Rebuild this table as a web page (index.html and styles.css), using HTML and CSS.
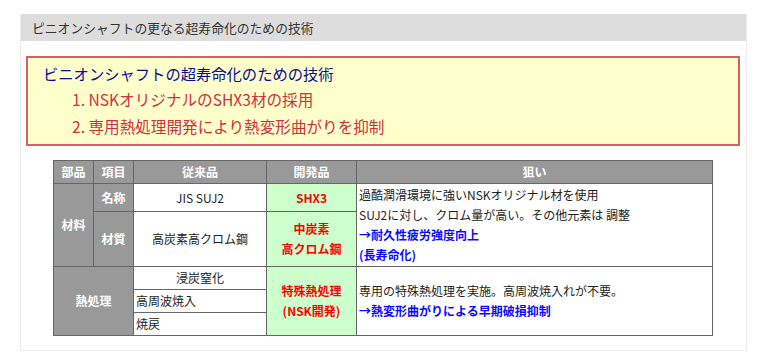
FILE: index.html
```html
<!DOCTYPE html>
<html lang="ja">
<head>
<meta charset="utf-8">
<link rel="stylesheet" href="styles.css">
</head>
<body>
<div class="panel">
  <h2 class="panel-title">ピニオンシャフトの更なる超寿命化のための技術</h2>
  <div class="panel-body">
    <div class="summary">
      <p class="summary-title">ビニオンシャフトの超寿命化のための技術</p>
      <ol class="summary-list">
        <li>1. NSKオリジナルのSHX3材の採用</li>
        <li>2. 専用熱処理開発により熱変形曲がりを抑制</li>
      </ol>
    </div>
    <table class="spec">
      <colgroup>
        <col class="c1"><col class="c2"><col class="c3"><col class="c4"><col class="c5">
      </colgroup>
      <tr class="r-head">
        <th>部品</th><th>項目</th><th>従来品</th><th>開発品</th><th>狙い</th>
      </tr>
      <tr class="r-name">
        <th rowspan="2">材料</th>
        <th>名称</th>
        <td class="center">JIS SUJ2</td>
        <td class="dev">SHX3</td>
        <td rowspan="2" class="aim">過酷潤滑環境に強いNSKオリジナル材を使用<br>SUJ2に対し、クロム量が高い。その他元素は 調整<br><b class="blue">→耐久性疲労強度向上<br>(長寿命化)</b></td>
      </tr>
      <tr class="r-mat">
        <th>材質</th>
        <td class="center">高炭素高クロム鋼</td>
        <td class="dev">中炭素<br>高クロム鋼</td>
      </tr>
      <tr class="r-sub">
        <th rowspan="3" colspan="2">熱処理</th>
        <td class="center">浸炭窒化</td>
        <td rowspan="3" class="dev">特殊熱処理<br>(NSK開発)</td>
        <td rowspan="3" class="aim">専用の特殊熱処理を実施。高周波焼入れが不要。<br><b class="blue">→熱変形曲がりによる早期破損抑制</b></td>
      </tr>
      <tr class="r-sub">
        <td>高周波焼入</td>
      </tr>
      <tr class="r-sub">
        <td>焼戻</td>
      </tr>
    </table>
  </div>
</div>
</body>
</html>
```

FILE: styles.css
```css
* { box-sizing: border-box; }
body {
  margin: 0;
  background: #fff;
  font-family: "Noto Sans CJK JP", "Noto Sans", sans-serif;
  color: #222;
}
.panel {
  width: 727px;
  margin: 14px 0 0 20px;
  border: 1px solid #ececec;
  border-top: none;
}
.panel-title {
  margin: 0;
  background: #dddddd;
  height: 27px;
  line-height: 27px;
  padding-left: 11px;
  font-size: 12.8px;
  font-weight: normal;
  color: #333;
}
.panel-body {
  padding: 15px 6px 14px 5px;
}
.summary {
  border: 2px solid #d06464;
  background: #ffffcc;
  padding: 2px 0 4px 15px;
}
.summary-title {
  margin: 0;
  line-height: 26px;
  font-size: 15.3px;
  color: #0a0a96;
}
.summary-list {
  list-style: none;
  margin: 0;
  padding: 0 0 0 29px;
  font-size: 15.6px;
  line-height: 27px;
  color: #d0303c;
}
.spec {
  width: 659px;
  margin: 14px auto 0;
  border-collapse: collapse;
  table-layout: fixed;
  font-size: 12px;
  line-height: 20px;
}
.c1 { width: 40px; }
.c2 { width: 40px; }
.c3 { width: 133px; }
.c4 { width: 90px; }
.c5 { width: 356px; }
.spec th, .spec td {
  border: 1px solid #666;
  padding: 0 2px;
}
.spec th {
  background: #999999;
  color: #fff;
  font-weight: bold;
  text-align: center;
}
.spec td { background: #fff; color: #222; }
.r-head { height: 23px; }
.r-name { height: 28px; }
.r-mat { height: 55px; }
.r-sub { height: 23px; }
.spec td.center { text-align: center; }
.spec td.dev {
  background: #ccffcc;
  color: #ff0000;
  font-weight: bold;
  text-align: center;
}
.spec td.aim { text-align: left; vertical-align: middle; }
.blue { color: #0a0aff; }
```
